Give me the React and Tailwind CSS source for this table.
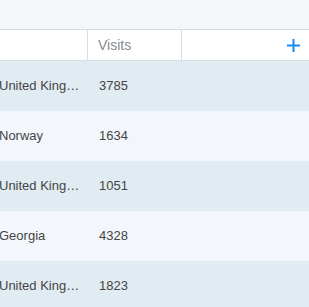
const rows = [
  { country: "United Kingdom", visits: 3785 },
  { country: "Norway", visits: 1634 },
  { country: "United Kingdom", visits: 1051 },
  { country: "Georgia", visits: 4328 },
  { country: "United Kingdom", visits: 1823 },
];

export default function App() {
  return (
    <div className="h-[307px] w-[309px] overflow-hidden bg-[#f3f7fa] font-['Liberation_Sans',Arial,sans-serif]">
      <div className="h-[29px]" />
      <div className="ml-[-11px] w-[320px]">
        <div className="flex h-[32px] border-y border-[#d3dfe9] bg-white">
          <div className="w-[99px] shrink-0 border-r border-[#d3dfe9]" />
          <div className="flex w-[94px] shrink-0 items-center border-r border-[#d3dfe9] pl-[10px] text-[14px] text-[#878c91]">
            Visits
          </div>
          <div className="flex flex-1 items-center justify-end pr-[9px]">
            <svg width="13" height="13" viewBox="0 0 13 13">
              <path d="M6.5 0v13M0 6.5h13" stroke="#148df2" strokeWidth="2" />
            </svg>
          </div>
        </div>
        {rows.map((r, i) => (
          <div
            key={i}
            className={`flex h-[50px] items-center text-[13px] text-[#454545] ${
              i % 2 === 0 ? "bg-[#e1ebf2]" : "bg-[#f3f7fb]"
            }`}
          >
            <div className="w-[99px] shrink-0 truncate pl-[10px] pr-[4px]">
              {r.country}
            </div>
            <div className="pl-[11px]">{r.visits}</div>
          </div>
        ))}
      </div>
    </div>
  );
}
